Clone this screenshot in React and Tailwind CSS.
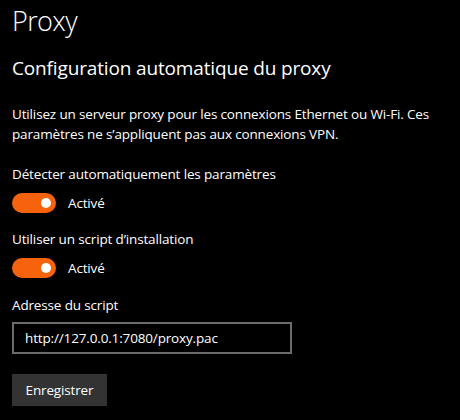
const font = { fontFamily: '"Open Sans", "Noto Sans", sans-serif' };

function Toggle({ label }) {
  return (
    <div className="flex items-center h-[20px] mt-[9px]">
      <div className="w-[44px] h-[20px] rounded-full bg-[#f7630c] flex items-center justify-end pr-[5px]">
        <div className="w-[10px] h-[10px] rounded-full bg-white" />
      </div>
      <span className="ml-[12px]">{label}</span>
    </div>
  );
}

export default function App() {
  return (
    <div
      className="w-[460px] h-[420px] bg-black text-white px-3 overflow-hidden text-[13.5px] leading-[20px] tracking-[-0.15px]"
      style={font}
    >
      <h1 className="pt-[3px] text-[27px] leading-[36px] font-light tracking-[-0.6px]">Proxy</h1>
      <h2 className="mt-[15px] text-[19px] leading-[28px] tracking-[-0.15px]">
        Configuration automatique du proxy
      </h2>
      <p className="mt-[22px] whitespace-nowrap">
        Utilisez un serveur proxy pour les connexions Ethernet ou Wi-Fi. Ces
        <br />
        paramètres ne s’appliquent pas aux connexions VPN.
      </p>

      <div className="mt-[20px]">Détecter automatiquement les paramètres</div>
      <Toggle label="Activé" />

      <div className="mt-[16px]">Utiliser un script d’installation</div>
      <Toggle label="Activé" />

      <div className="mt-[17px]">Adresse du script</div>
      <div className="mt-[7px] w-[280px] h-[32px] border-2 border-[#6b6b6b] flex items-center pl-[11px]">
        http://127.0.0.1:7080/proxy.pac
      </div>

      <button className="mt-[20px] w-[95px] h-[32px] bg-[#333333] text-white flex items-center justify-center">
        Enregistrer
      </button>
    </div>
  );
}
